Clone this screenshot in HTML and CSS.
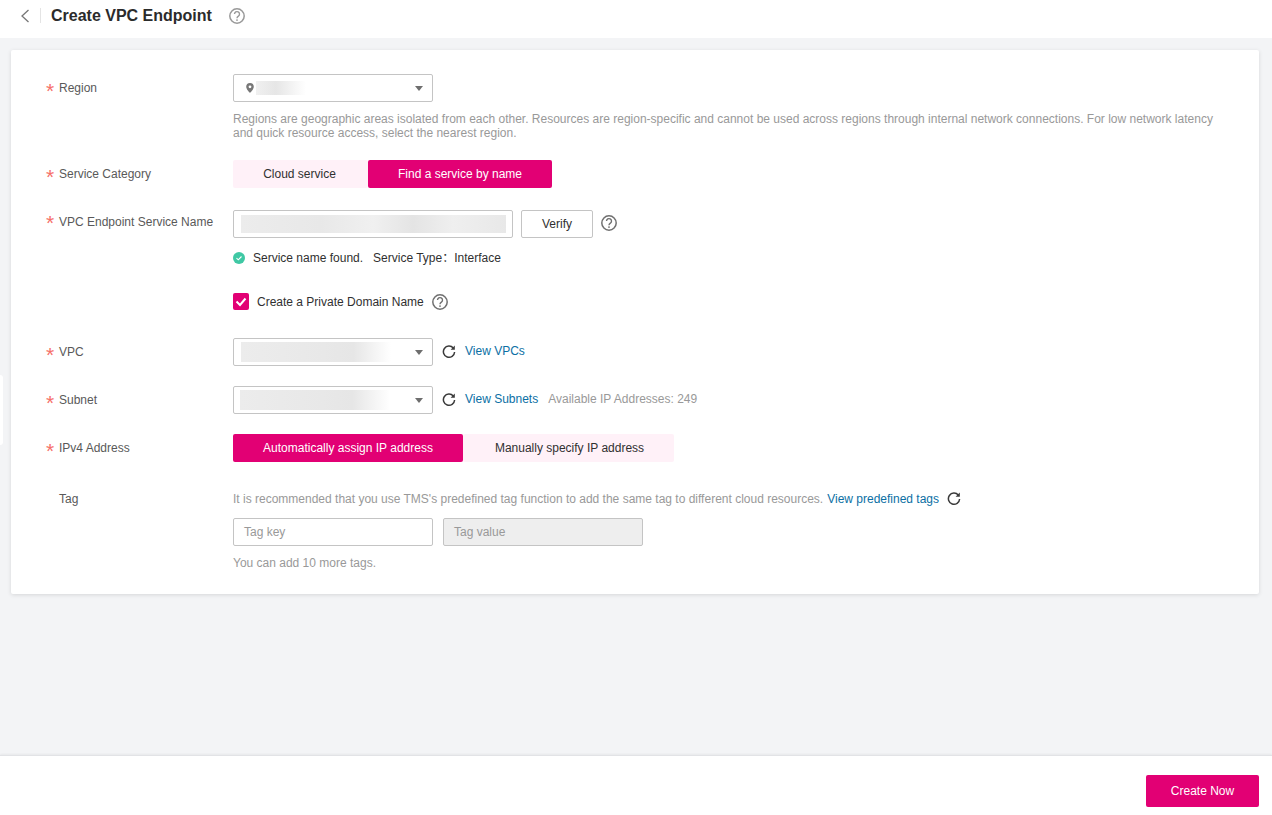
FILE: index.html
```html
<!DOCTYPE html>
<html lang="en">
<head>
  <meta charset="UTF-8">
  <meta name="viewport" content="width=device-width, initial-scale=1.0">
  <title>Create VPC Endpoint</title>
  <link rel="stylesheet" href="styles.css">
</head>
<body>
  <svg class="sprite" width="0" height="0">
    <symbol id="help" viewBox="0 0 16 16">
      <circle cx="8" cy="8" r="7.200" fill="none" stroke="currentColor" stroke-width="1.500"/>
      <path d="M5.500 6.100a2.500 2.500 0 1 1 3.900 2.100c-.9.6-1.400 1-1.400 2.100" fill="none" stroke="currentColor" stroke-width="1.400"/>
      <circle cx="8" cy="12.100" r=".9" fill="currentColor"/>
    </symbol>
    <symbol id="refresh" viewBox="0 0 14 14">
      <path d="M11.300 3.100A5.600 5.600 0 1 0 12.600 7" fill="none" stroke="currentColor" stroke-width="1.500"/>
      <path d="M12.800 .6v4.200H8.600z" fill="currentColor"/>
    </symbol>
  </svg>

  <div class="page">
    <header class="topbar">
      <svg class="back" width="10" height="14" viewBox="0 0 10 14"><path d="M8.500 1 2 7l6.500 6" fill="none" stroke="#777" stroke-width="1.300"/></svg>
      <span class="divider"></span>
      <h1>Create VPC Endpoint</h1>
      <svg class="title-help" width="16" height="16"><use href="#help"/></svg>
    </header>

    <main class="content">
      <span class="edge-tab"></span>
      <div class="card">
        <div class="row row-region">
          <label class="label required">Region</label>
          <div class="control">
            <div class="select">
              <svg class="pin" width="8" height="10" viewBox="0 0 8 10"><path d="M4 0a3.800 3.800 0 0 0-3.800 3.800C.2 6.500 4 10 4 10s3.800-3.500 3.800-6.200A3.800 3.800 0 0 0 4 0zm0 5.200a1.400 1.400 0 1 1 0-2.800 1.400 1.400 0 0 1 0 2.800z" fill="#777"/></svg>
              <span class="blur blur-region"></span>
              <span class="caret"></span>
            </div>
            <p class="hint hint-region">Regions are geographic areas isolated from each other. Resources are region-specific and cannot be used across regions through internal network connections. For low network latency and quick resource access, select the nearest region.</p>
          </div>
        </div>

        <div class="row row-category">
          <label class="label required">Service Category</label>
          <div class="segments">
            <span class="segment seg-cloud">Cloud service</span>
            <span class="segment seg-find active">Find a service by name</span>
          </div>
        </div>

        <div class="row row-name">
          <label class="label required">VPC Endpoint Service Name</label>
          <div class="control">
            <div class="inline">
              <div class="field field-name"><span class="blur blur-name"></span></div>
              <button class="btn-verify" type="button">Verify</button>
              <svg class="help help-verify" width="16" height="16"><use href="#help"/></svg>
            </div>
            <div class="found">
              <svg width="12" height="12" viewBox="0 0 12 12"><circle cx="6" cy="6" r="6" fill="#3fc8a4"/><path d="M3.500 6.100 5.300 7.800 8.500 4.500" fill="none" stroke="#fff" stroke-width="1.100"/></svg>
              <span class="found-text">Service name found.</span>
              <span class="found-text found-type">Service Type：Interface</span>
            </div>
            <div class="check-row">
              <span class="checkbox"><svg width="12" height="10" viewBox="0 0 12 10"><path d="M1.500 4.500 5 8l5.500-6.500" fill="none" stroke="#fff" stroke-width="2"/></svg></span>
              <span>Create a Private Domain Name</span>
              <svg class="help" width="16" height="16"><use href="#help"/></svg>
            </div>
          </div>
        </div>

        <div class="row row-vpc">
          <label class="label required">VPC</label>
          <div class="inline">
            <div class="select"><span class="blur blur-vpc"></span><span class="caret"></span></div>
            <svg class="refresh" width="14" height="14"><use href="#refresh"/></svg>
            <a class="link" href="#">View VPCs</a>
          </div>
        </div>

        <div class="row row-subnet">
          <label class="label required">Subnet</label>
          <div class="inline">
            <div class="select"><span class="blur blur-subnet"></span><span class="caret"></span></div>
            <svg class="refresh" width="14" height="14"><use href="#refresh"/></svg>
            <a class="link" href="#">View Subnets</a>
            <span class="muted available">Available IP Addresses: 249</span>
          </div>
        </div>

        <div class="row row-ipv4">
          <label class="label required">IPv4 Address</label>
          <div class="segments">
            <span class="segment seg-auto active">Automatically assign IP address</span>
            <span class="segment seg-manual">Manually specify IP address</span>
          </div>
        </div>

        <div class="row row-tag">
          <label class="label label-tag">Tag</label>
          <div class="control">
            <div class="tag-text">
              <span class="muted">It is recommended that you use TMS's predefined tag function to add the same tag to different cloud resources.</span>
              <a class="link" href="#">View predefined tags</a>
              <svg class="refresh" width="14" height="14"><use href="#refresh"/></svg>
            </div>
            <div class="tag-fields">
              <div class="field field-tag">Tag key</div>
              <div class="field field-tag disabled">Tag value</div>
            </div>
            <p class="hint hint-tag">You can add 10 more tags.</p>
          </div>
        </div>
      </div>
    </main>

    <footer class="footer">
      <button class="btn-create" type="button">Create Now</button>
    </footer>
  </div>
</body>
</html>
```

FILE: styles.css
```css
* {
  box-sizing: border-box;
}
html, body {
  margin: 0;
  height: 815px;
  overflow: hidden;
}
body {
  font-family: "Liberation Sans", "Noto Sans CJK SC", Arial, sans-serif;
  font-size: 12px;
  color: #303030;
  background: #f3f4f6;
}
.sprite {
  position: absolute;
}
.page {
  display: flex;
  flex-direction: column;
  height: 815px;
}

/* top bar */
.topbar {
  display: flex;
  align-items: center;
  height: 38px;
  padding: 0 0 7px 20px;
  background: #fff;
}
.back {
  flex: none;
}
.divider {
  width: 1px;
  height: 15px;
  margin: 0 10px 0 10px;
  background: #e4e4e4;
}
.topbar h1 {
  margin: 0;
  font-size: 16px;
  font-weight: bold;
  color: #2b2b2b;
}
.title-help {
  margin-left: 17px;
  margin-top: 1px;
  color: #999;
}

/* card */
.content {
  position: relative;
  flex: 1;
  padding: 12px 13px 0 11px;
}
.edge-tab {
  position: absolute;
  left: 0;
  top: 337px;
  width: 3px;
  height: 70px;
  background: #fff;
  border-radius: 0 4px 4px 0;
}
.card {
  height: 544px;
  padding: 24px 36px 0;
  background: #fff;
  border-radius: 2px;
  box-shadow: 0 1px 4px rgba(0,0,0,0.12);
}
.row {
  display: flex;
  align-items: flex-start;
}
.row-category { margin-top: 20px; }
.row-name { margin-top: 22px; }
.row-vpc { margin-top: 28px; }
.row-subnet { margin-top: 20px; }
.row-ipv4 { margin-top: 20px; }
.row-tag { margin-top: 30px; }

.label {
  flex: none;
  width: 186px;
  padding-left: 12px;
  position: relative;
  line-height: 28px;
  color: #595959;
  white-space: nowrap;
}
.required::before {
  content: "*";
  position: absolute;
  left: -1px;
  top: 3px;
  font-size: 21px;
  font-weight: normal;
  color: #f66f6a;
}
.row-name .label {
  line-height: 24px;
}
.row-name .required::before {
  top: 1px;
}
.label-tag {
  line-height: 14px;
}
.control {
  flex: 1;
}
.inline {
  display: flex;
  align-items: center;
}

/* fields */
.select, .field {
  position: relative;
  height: 28px;
  background: #fff;
  border: 1px solid #c4c4c4;
  border-radius: 2px;
}
.select {
  width: 200px;
}
.caret {
  position: absolute;
  right: 9px;
  top: 11px;
  border-left: 4.500px solid transparent;
  border-right: 4.500px solid transparent;
  border-top: 5px solid #6e6e6e;
}
.pin {
  position: absolute;
  left: 12px;
  top: 8px;
}
.blur {
  position: absolute;
  display: block;
}
.blur-region {
  left: 22px;
  top: 6px;
  width: 50px;
  height: 14px;
  background: linear-gradient(90deg, #f0f0f0, #e6e6e6 40%, #fff);
}
.blur-name {
  left: 7px;
  top: 4px;
  width: 265px;
  height: 18px;
  background: linear-gradient(90deg, #ececec, #e8e8e8 30%, #f0f0f0 50%, #e4e4e4 65%, #efefef 80%, #e8e8e8);
}
.blur-vpc, .blur-subnet {
  top: 3px;
  width: 150px;
  height: 20px;
  background: linear-gradient(90deg, #ececec, #e8e8e8 55%, #e6e6e6 75%, #fff);
}
.blur-vpc { left: 7px; }
.blur-subnet { left: 6px; }
.field-name {
  width: 280px;
}
.btn-verify {
  width: 72px;
  height: 28px;
  margin-left: 8px;
  padding: 0;
  font: inherit;
  color: #303030;
  background: #fff;
  border: 1px solid #c4c4c4;
  border-radius: 2px;
}
.help {
  margin-left: 8px;
  color: #707070;
}
.help-verify {
  margin-top: -3px;
}
.hint {
  margin: 0;
  line-height: 14px;
  color: #999;
}
.hint-region {
  margin-top: 10px;
}
.hint-tag {
  margin-top: 10px;
}

/* segmented buttons */
.segments {
  display: flex;
}
.segment {
  height: 28px;
  line-height: 28px;
  text-align: center;
  color: #303030;
  background: #fff1f8;
  border-radius: 2px;
}
.segment.active {
  color: #fff;
  background: #e20074;
}
.seg-cloud { width: 135px; padding-right: 2px; }
.seg-find { width: 184px; }
.seg-auto { width: 230px; }
.seg-manual { width: 211px; padding-left: 2px; }

/* found line + checkbox */
.found {
  display: flex;
  align-items: center;
  height: 14px;
  margin-top: 13px;
}
.found svg {
  margin-right: 8px;
}
.found-text {
  display: block;
  height: 14px;
  line-height: 14px;
}
.found-type {
  margin-left: 10px;
}
.check-row {
  display: flex;
  align-items: center;
  height: 17px;
  margin-top: 28px;
}
.checkbox {
  display: flex;
  align-items: center;
  justify-content: center;
  width: 16px;
  height: 17px;
  margin-right: 8px;
  background: #e20074;
  border-radius: 2px;
}

/* links */
.refresh {
  margin-left: 9px;
  color: #3a3a3a;
}
.link {
  color: #0b6fa4;
  text-decoration: none;
}
.inline .link {
  margin-left: 9px;
  margin-top: -2px;
}
.muted {
  color: #999;
}
.available {
  margin-left: 10px;
  margin-top: -2px;
}

/* tags */
.tag-text {
  display: flex;
  align-items: center;
  height: 14px;
  white-space: nowrap;
}
.tag-text .link {
  margin-left: 4px;
}
.tag-text .refresh {
  margin-left: 8px;
}
.tag-fields {
  display: flex;
  gap: 10px;
  margin-top: 12px;
}
.field-tag {
  width: 200px;
  padding-left: 10px;
  line-height: 26px;
  color: #999;
}
.field-tag.disabled {
  background: #eee;
}

/* footer */
.footer {
  display: flex;
  justify-content: flex-end;
  height: 60px;
  padding: 19px 13px 0 0;
  background: #fff;
  border-top: 1px solid #e2e3e6;
  box-shadow: 0 -1px 2px rgba(0,0,0,0.05);
}
.btn-create {
  width: 113px;
  height: 32px;
  padding: 0;
  font: inherit;
  color: #fff;
  background: #e20074;
  border: none;
  border-radius: 2px;
}
```
